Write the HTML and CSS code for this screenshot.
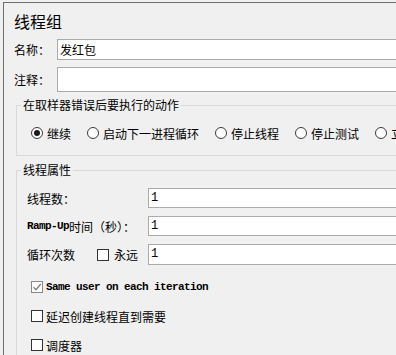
FILE: index.html
```html
<!DOCTYPE html>
<html lang="zh-CN">
<head>
<meta charset="utf-8">
<title>线程组</title>
<link rel="stylesheet" href="styles.css">
</head>
<body>
<div class="frame">
  <div class="title">线程组</div>
  <div class="fields">
    <span class="lbl">名称：</span><div class="input h21">发红包</div>
    <span class="lbl">注释：</span><div class="input h25"></div>
  </div>
  <fieldset class="group g1">
    <legend>在取样器错误后要执行的动作</legend>
    <div class="radios">
      <span class="opt"><span class="radio on"></span>继续</span>
      <span class="opt"><span class="radio"></span>启动下一进程循环</span>
      <span class="opt"><span class="radio"></span>停止线程</span>
      <span class="opt"><span class="radio"></span>停止测试</span>
      <span class="opt"><span class="radio"></span>立即停止测试</span>
    </div>
  </fieldset>
  <fieldset class="group g2">
    <legend>线程属性</legend>
    <div class="props">
      <span class="plbl">线程数：</span><div class="input num">1</div>
      <span class="plbl"><span class="mono">Ramp-Up</span>时间（秒）：</span><div class="input num">1</div>
      <span class="plbl">循环次数<span class="cb loopcb"></span>永远</span><div class="input num h21">1</div>
    </div>
    <div class="checks">
      <div class="chk"><span class="cb checked"><svg viewBox="0 0 12 12" width="12" height="12"><polyline points="2.5,6.2 5,8.7 9.8,3" fill="none" stroke="#7c7c7c" stroke-width="1.3"/></svg></span><span class="mono">Same user on each iteration</span></div>
      <div class="chk"><span class="cb"></span>延迟创建线程直到需要</div>
      <div class="chk"><span class="cb"></span>调度器</div>
    </div>
  </fieldset>
</div>
</body>
</html>
```
FILE: styles.css
```css
html, body {
  margin: 0;
  padding: 0;
  overflow: hidden;
  background: #f0f0f0;
}
body {
  font-family: "Noto Sans CJK SC", "Noto Sans", sans-serif;
  font-size: 12px;
  color: #000;
}
.frame {
  margin: 2px 0 0 3px;
  border-top: 1px solid #6e6e6e;
  border-left: 1px solid #6e6e6e;
  width: 900px;
  height: 420px;
  box-sizing: border-box;
}
.title {
  margin-top: 8px;
  padding-left: 10px;
  font-size: 16px;
  line-height: 20px;
}
.fields {
  margin-top: 8px;
  padding-left: 10px;
  display: grid;
  grid-template-columns: 43px 1fr;
  row-gap: 7px;
  align-items: center;
}
.lbl {
  line-height: 21px;
}
.input {
  background: #fff;
  border: 1px solid #ababab;
  box-sizing: border-box;
  height: 20px;
  padding-left: 2px;
  line-height: 18px;
}
.h21 { height: 21px; line-height: 19px; }
.h25 { height: 25px; }
.group {
  margin: 0 0 0 12px;
  border: 1px solid #d9d9d9;
  padding: 0 0 0 4px;
  min-width: 0;
}
.group legend {
  padding: 0 2px;
  line-height: 16px;
  font-size: 12px;
}
.g1 {
  margin-top: 5px;
  padding-bottom: 12px;
}
.g2 {
  margin-top: 6px;
  padding-bottom: 40px;
}
.radios {
  margin-top: 10px;
  height: 20px;
  padding-left: 10px;
  display: flex;
  align-items: center;
  gap: 16px;
  white-space: nowrap;
}
.opt {
  display: flex;
  align-items: center;
  gap: 4px;
}
.radio {
  width: 12px;
  height: 12px;
  box-sizing: border-box;
  border: 1px solid #3a3a3a;
  border-radius: 50%;
  background: #fff;
  display: flex;
  align-items: center;
  justify-content: center;
}
.radio.on::after {
  content: "";
  width: 6px;
  height: 6px;
  border-radius: 50%;
  background: #1a1a1a;
}
.props {
  padding: 10px 0 0 6px;
  display: grid;
  grid-template-columns: 121px 1fr;
  row-gap: 8px;
  align-items: center;
}
.plbl {
  display: flex;
  align-items: center;
  white-space: nowrap;
}
.mono {
  font-family: "Liberation Mono", monospace;
  font-size: 11px;
  font-weight: bold;
  letter-spacing: -0.6px;
}
.num {
  font-family: "Liberation Mono", monospace;
  font-size: 12px;
}
.cb {
  width: 12px;
  height: 12px;
  box-sizing: border-box;
  border: 1px solid #333;
  background: #fff;
  display: inline-flex;
  flex: none;
}
.cb.checked {
  border-color: #8a8a8a;
}
.cb svg {
  margin: -1px;
}
.loopcb {
  margin: 0 5px 0 22px;
}
.checks {
  margin-top: 12px;
  padding-left: 10px;
  display: flex;
  flex-direction: column;
  gap: 9px;
}
.chk {
  height: 20px;
  display: flex;
  align-items: center;
  gap: 3px;
  white-space: nowrap;
}
```
